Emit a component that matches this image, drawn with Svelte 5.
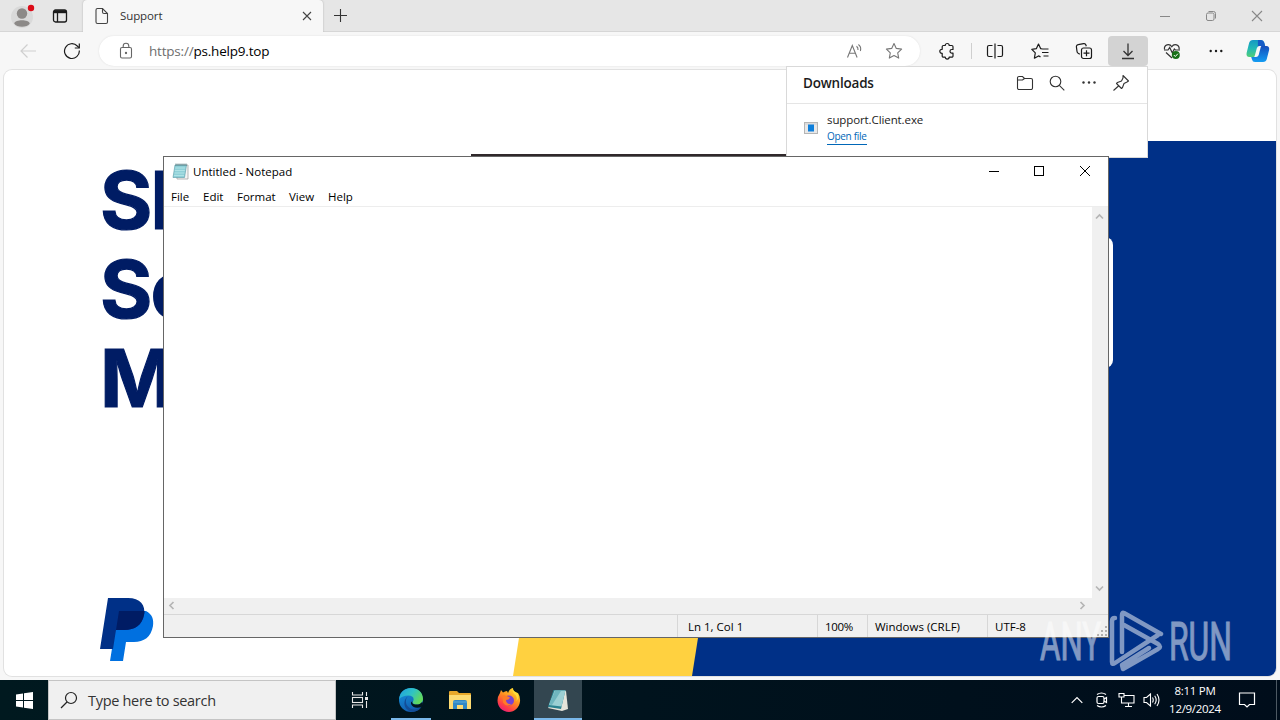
<script>
  const menus = [
    { label: 'File', width: 32 },
    { label: 'Edit', width: 34 },
    { label: 'Format', width: 52 },
    { label: 'View', width: 39 },
    { label: 'Help', width: 40 }
  ];
  const statusCells = [
    { text: 'Ln 1, Col 1', kind: 'position' },
    { text: '100%', kind: 'zoom' },
    { text: 'Windows (CRLF)', kind: 'ending' },
    { text: 'UTF-8', kind: 'encoding' }
  ];
  const headline = ['Sh', 'So', 'M'];
</script>

<div class="desktop">
  <div class="browser">
    <div class="tab-strip">
      <div class="profile">
        <svg width="26" height="26" viewBox="0 0 26 26">
          <circle cx="13" cy="14" r="11" fill="#d9d9d9" />
          <circle cx="13" cy="10.5" r="5.2" fill="#8c8987" />
          <path d="M5.2 20.5c1-4.2 14.6-4.2 15.6 0-2.5 4.4-13.1 4.4-15.6 0z" fill="#8c8987" />
          <circle cx="22" cy="5" r="3.2" fill="#dc0b18" />
        </svg>
      </div>
      <div class="tab-actions">
        <svg width="16" height="16" viewBox="0 0 16 16" fill="none" stroke="#1b1b1b" stroke-width="1.300">
          <rect x="1.500" y="2" width="13" height="12" rx="2" />
          <path d="M2 3.700h12" stroke-width="3" />
          <path d="M5.500 4v10" />
        </svg>
      </div>
      <div class="tab">
        <svg width="16" height="18" viewBox="0 0 16 18" fill="none" stroke="#444" stroke-width="1.100">
          <path d="M3.500 1.500h5l5 5v8.500a1.500 1.500 0 0 1-1.500 1.500h-8.500a1.500 1.500 0 0 1-1.500-1.500v-12a1.500 1.500 0 0 1 1.500-1.500z" />
          <path d="M8.500 1.500v3.500a1.500 1.500 0 0 0 1.500 1.500h3.500" />
        </svg>
        <span class="tab-title">Support</span>
        <svg width="10" height="10" viewBox="0 0 10 10" stroke="#444" stroke-width="1.100">
          <path d="M1 1l8 8M9 1l-8 8" />
        </svg>
      </div>
      <div class="new-tab">
        <svg width="15" height="15" viewBox="0 0 15 15" stroke="#333" stroke-width="1.100">
          <path d="M7.500 1v13M1 7.500h13" />
        </svg>
      </div>
      <div class="window-buttons">
        <svg width="46" height="31" viewBox="0 0 46 31" stroke="#888"><path d="M18 16.500h10" /></svg>
        <svg width="46" height="31" viewBox="0 0 46 31" fill="none" stroke="#888">
          <rect x="18.500" y="13" width="7.500" height="7.500" rx="1.500" />
          <path d="M20.500 11.500h5a2 2 0 0 1 2 2v5" />
        </svg>
        <svg width="46" height="31" viewBox="0 0 46 31" stroke="#888" stroke-width="1.100"><path d="M18 11l10 10M28 11l-10 10" /></svg>
      </div>
    </div>

    <div class="toolbar">
      <div class="nav-button">
        <svg width="18" height="16" viewBox="0 0 18 16" fill="none" stroke="#cfcfcf" stroke-width="1.200">
          <path d="M17 8h-15M8.500 1.500l-6.500 6.500 6.500 6.500" />
        </svg>
      </div>
      <div class="nav-button reload">
        <svg width="18" height="18" viewBox="0 0 18 18" fill="none" stroke="#1b1b1b" stroke-width="1.200">
          <path d="M16.300 8.500a7.400 7.400 0 1 1-2-4.500l1.700 1.700" />
          <path d="M16.300 1.500v4.500h-4.500" />
        </svg>
      </div>
      <div class="address-bar">
        <svg class="lock" width="14" height="18" viewBox="0 0 14 18" fill="none" stroke="#666" stroke-width="1.100">
          <rect x="1.500" y="5.500" width="11" height="10.500" rx="1.500" />
          <path d="M4.200 5.500v-1.500a2.800 2.800 0 0 1 5.600 0v1.500" />
          <circle cx="7" cy="11" r=".6" fill="#666" />
        </svg>
        <span class="url"><span class="scheme">https://</span>ps.help9.top</span>
        <svg class="read" width="18" height="16" viewBox="0 0 18 16" fill="none" stroke="#777" stroke-width="1.100">
          <path d="M1.500 14.500l4.800-12 4.800 12M3.200 10.300h6.300" />
          <path d="M10.500 3.200c1.300 1 1.700 2.300 1.500 3.800M12.400 1.500c2.100 1.500 2.700 4 2 6.500" />
        </svg>
        <svg class="star" width="18" height="18" viewBox="0 0 18 18" fill="none" stroke="#777" stroke-width="1.100" stroke-linejoin="round">
          <path d="M9 1.500l2.300 4.900 5.300.7-3.900 3.700 1 5.300-4.700-2.600-4.700 2.600 1-5.300-3.900-3.700 5.300-.7z" />
        </svg>
      </div>
      <div class="actions">
        <div class="action extension">
          <svg width="18" height="18" viewBox="0 0 18 18" fill="none" stroke="#1b1b1b" stroke-width="1.200" stroke-linejoin="round">
            <path d="M7.200 3.500a2 2 0 0 1 4 0h2.600a1.200 1.200 0 0 1 1.200 1.200v2.800h-1.200a1.800 1.800 0 0 0 0 3.600h1.200v2.800a1.200 1.200 0 0 1-1.200 1.200h-2.600a2 2 0 0 1-4 0h-1.800a1.200 1.200 0 0 1-1.200-1.200v-2.600h-.4a2 2 0 0 1 0-4h.4v-2.600a1.200 1.200 0 0 1 1.200-1.200z" />
          </svg>
        </div>
        <div class="divider"></div>
        <div class="action split">
          <svg width="18" height="16" viewBox="0 0 18 16" fill="none" stroke="#1b1b1b" stroke-width="1.200">
            <path d="M6.500 2.500h-3.500a1.500 1.500 0 0 0-1.500 1.500v8a1.500 1.500 0 0 0 1.500 1.500h3.500M11.500 2.500h3.500a1.500 1.500 0 0 1 1.500 1.500v8a1.500 1.500 0 0 1-1.500 1.500h-3.500M9 .5v15" />
          </svg>
        </div>
        <div class="action">
          <svg width="18" height="18" viewBox="0 0 18 18" fill="none" stroke="#1b1b1b" stroke-width="1.200" stroke-linejoin="round">
            <path d="M11.500 7l-1.800-.3-2.200-4.700-2.200 4.700-4.500.7 3.500 3.500-.9 5.300 4.100-2.300 2 1M11.500 7h6M11 10.500h6.500M12.500 14h5" />
          </svg>
        </div>
        <div class="action">
          <svg width="18" height="18" viewBox="0 0 18 18" fill="none" stroke="#1b1b1b" stroke-width="1.200">
            <rect x="6.500" y="6" width="10" height="10.500" rx="2" />
            <path d="M4.800 12.200l-1.600-.9a2.500 2.500 0 0 1-1.200-2l-.6-4.500a2 2 0 0 1 1.800-2.200l5.400-1a2 2 0 0 1 2.300 1.400l.4 1.300M11.500 8.200v6M8.500 11.200h6" />
          </svg>
        </div>
        <div class="action active">
          <svg width="16" height="18" viewBox="0 0 16 18" fill="none" stroke="#333" stroke-width="1.300">
            <path d="M8 1.500v12M3.500 9l4.500 4.500 4.500-4.500M2 16.500h12" />
          </svg>
        </div>
        <div class="action">
          <svg width="18" height="18" viewBox="0 0 18 18" fill="none" stroke="#333" stroke-width="1.200">
            <path d="M1.500 7.500c-.8-5 5-6.500 7.300-2.800 2.300-3.700 8-2.200 7.300 2.800M3 10.500l6 5.500" />
            <path d="M1 8h4l1.700-2.500 2.600 5.500 2-4 1 1h4.700" />
            <circle cx="12.800" cy="13" r="4" fill="#187018" stroke="none" />
            <path d="M10.800 13l1.500 1.500 2.600-2.800" stroke="#fff" stroke-width="1" />
          </svg>
        </div>
        <div class="action">
          <svg width="16" height="4" viewBox="0 0 16 4" fill="#1b1b1b"><circle cx="2.700" cy="2" r="1.200" /><circle cx="8" cy="2" r="1.200" /><circle cx="13.300" cy="2" r="1.200" /></svg>
        </div>
        <div class="copilot">
          <svg width="24" height="24" viewBox="0 0 24 24">
            <defs>
              <linearGradient id="cp-a" x1="0" y1="0" x2="0" y2="1"><stop offset="0" stop-color="#1498c4" /><stop offset=".5" stop-color="#22b9b6" /><stop offset="1" stop-color="#51ce77" /></linearGradient>
              <linearGradient id="cp-b" x1="0" y1="0" x2="0" y2="1"><stop offset="0" stop-color="#144dbb" /><stop offset="1" stop-color="#139cf2" /></linearGradient>
            </defs>
            <path d="M7 1h8q2.500 0 3.200 2.500l.8 3.500h-4.500q-2 0-2.600 2l-2 7q-.5 2-2.500 2h-4q-3.400 0-2.800-4l2.500-10q.8-3 3.900-3z" fill="url(#cp-a)" />
            <path d="M12 1h3q2.500 0 3.200 2.500l1 3.500h-5q-2 0-2.400 1.500z" fill="#155bc6" />
            <path d="M17 23h-8q-2.500 0-3-2.500l-.8-2.500h3.500q2 0 2.600-2l2-7q.6-2 2.500-2h4.500q3.400 0 2.800 4l-2.300 9q-.7 3-3.800 3z" fill="url(#cp-b)" />
            <path d="M15 7h-1.500q-2 0-2.600 2l-2.500 9h1.500q2.200 0 2.800-2z" fill="#f7f7f7" />
          </svg>
        </div>
      </div>
    </div>

    <div class="page">
      <svg class="page-shapes" width="1272" height="606" viewBox="4 70 1272 606">
        <path d="M471 154h320v4h-320z" fill="#30282b" />
        <path d="M519 638h180l-6 38h-180z" fill="#ffd140" />
        <path d="M790 141h486v535h-584l6-38z" fill="#003087" />
        <rect x="800" y="237" width="313" height="131" rx="8" fill="#fff" />
      </svg>
      <div class="hero">
        <h1 class="headline">
          {#each headline as line}
            <span>{line}</span>
          {/each}
        </h1>
        <svg class="paypal" width="54" height="65" viewBox="0 0 54 65">
          <path d="M18 13h28c6 3 8 8 7 15-2 11-9 16-19 16h-8l-3 19h-13z" fill="#0070e0" />
          <path d="M8 0h20c12 0 18 7 16 17-2 10-9 15-20 15h-8l-3 19h-13z" fill="#003087" />
          <path d="M19 13h25.500q.1 2-.5 4c-2 10-9 15-20 15h-8z" fill="#001c64" />
        </svg>
      </div>
    </div>
  </div>

  <div class="downloads">
    <div class="downloads-header">
      <h2>Downloads</h2>
      <div class="downloads-actions">
        <svg width="18" height="18" viewBox="0 0 18 18" fill="none" stroke="#333" stroke-width="1.100">
          <path d="M1.500 5v-1a1.500 1.500 0 0 1 1.500-1.500h3.500l2 2h6.500a1.500 1.500 0 0 1 1.500 1.500v8a1.500 1.500 0 0 1-1.500 1.500h-12a1.500 1.500 0 0 1-1.500-1.500zM1.500 6h5l2-1.500" />
        </svg>
        <svg width="18" height="18" viewBox="0 0 18 18" fill="none" stroke="#333" stroke-width="1.100">
          <circle cx="7.500" cy="7.500" r="5.300" /><path d="M11.300 11.300l5 5" />
        </svg>
        <svg width="18" height="18" viewBox="0 0 18 18" fill="#333"><circle cx="3.500" cy="8.500" r="1.200" /><circle cx="9" cy="8.500" r="1.200" /><circle cx="14.500" cy="8.500" r="1.200" /></svg>
        <svg width="18" height="18" viewBox="0 0 18 18" fill="none" stroke="#333" stroke-width="1.100" stroke-linejoin="round">
          <path d="M11 1.500l5.500 5.500-1.500 1-3 1.500-1.500 4-1 1-5-5 1-1 4-1.500 1.500-3zM6.500 12l-5 4.500" />
        </svg>
      </div>
    </div>
    <div class="download-item">
      <svg width="14" height="12" viewBox="0 0 14 12">
        <rect x=".5" y=".5" width="13" height="11" fill="#e8e8e8" stroke="#b5b5b5" />
        <path d="M1 2h12" stroke="#cfcfcf" />
        <rect x="4" y="2.500" width="6" height="7" fill="#0e7fdb" />
      </svg>
      <div class="download-info">
        <span class="file-name">support.Client.exe</span>
        <span class="open-file">Open file</span>
      </div>
    </div>
  </div>

  <div class="notepad">
    <div class="title-bar">
      <svg width="17" height="17" viewBox="0 0 17 17">
        <path d="M4 2h12v14h-11z" fill="#f4f4f4" stroke="#999" stroke-width=".7" />
        <path d="M3 2h11.500l-2 12.500h-11.500z" fill="#8fd0d8" stroke="#5598a4" stroke-width=".6" />
        <path d="M3.300 5h10M2.800 7.500h10M2.500 10h10M2 12.500h10" stroke="#b8e7ea" stroke-width=".8" />
        <path d="M4 .5v2.500M6 .5v2.500M8 .5v2.500M10 .5v2.500M12 .5v2.500M14 .5v2.500" stroke="#50777c" stroke-width=".8" />
      </svg>
      <span class="title">Untitled - Notepad</span>
      <svg width="46" height="30" viewBox="0 0 46 30" stroke="#000"><path d="M18 15.500h10" /></svg>
      <svg width="45" height="30" viewBox="0 0 45 30" fill="none" stroke="#000"><rect x="17.500" y="10.500" width="9" height="9" /></svg>
      <svg width="46" height="30" viewBox="0 0 46 30" stroke="#000"><path d="M18 10l10 10M28 10l-10 10" /></svg>
    </div>
    <div class="menu-bar">
      {#each menus as menu}
        <span style="width: {menu.width}px">{menu.label}</span>
      {/each}
    </div>
    <div class="editor">
      <div class="text-area"></div>
      <div class="scroll-vertical">
        <svg width="9" height="7" viewBox="0 0 9 7" fill="none" stroke="#b5b5b5" stroke-width="1.700"><path d="M1 5.500l3.500-3.500 3.500 3.500" /></svg>
        <svg width="9" height="7" viewBox="0 0 9 7" fill="none" stroke="#b5b5b5" stroke-width="1.700"><path d="M1 1.500l3.500 3.500 3.500-3.500" /></svg>
      </div>
    </div>
    <div class="scroll-horizontal">
      <svg width="7" height="9" viewBox="0 0 7 9" fill="none" stroke="#b5b5b5" stroke-width="1.700"><path d="M5.500 1l-3.500 3.500 3.500 3.500" /></svg>
      <svg width="7" height="9" viewBox="0 0 7 9" fill="none" stroke="#b5b5b5" stroke-width="1.700"><path d="M1.500 1l3.500 3.500-3.500 3.500" /></svg>
    </div>
    <div class="status-bar">
      {#each statusCells as cell}
        <span class="cell {cell.kind}">{cell.text}</span>
      {/each}
      <svg width="11" height="11" viewBox="0 0 11 11" fill="#b0b0b0"><path d="M8 0h2v2h-2zM8 4h2v2h-2zM8 8h2v2h-2zM4 4h2v2h-2zM4 8h2v2h-2zM0 8h2v2h-2z" /></svg>
    </div>
  </div>

  <!-- Sandbox watermark over the desktop -->
  <svg class="watermark" width="210" height="80" viewBox="1030 600 210 80">
    <g fill="#fff" stroke="#fff" stroke-width="1" font-family="Roboto, sans-serif" font-size="53">
      <text x="1040" y="660" textLength="61" lengthAdjust="spacingAndGlyphs">ANY</text>
      <text x="1169" y="660" textLength="63" lengthAdjust="spacingAndGlyphs">RUN</text>
    </g>
    <g fill="none" stroke="#fff" stroke-width="4.500" stroke-linecap="round" stroke-linejoin="round">
      <path d="M1115 618q-3 0-3 3v41q0 3 3 1l43-28" />
      <path d="M1161 634l-37-21q-2-1-2 2v37" />
      <path d="M1124 625l34 19q4 3 0 5l-35 20-1-4 27-17" />
    </g>
  </svg>

  <div class="taskbar">
    <div class="start">
      <svg width="17" height="17" viewBox="0 0 17 17" fill="#fff"><path d="M0 2.500l7-1v6.500h-7zM8 1.300l9-1.300v8h-9zM0 9h7v6.500l-7-1zM8 9h9v8l-9-1.300z" /></svg>
    </div>
    <div class="search-box">
      <svg width="18" height="18" viewBox="0 0 18 18" fill="none" stroke="#222" stroke-width="1.200"><circle cx="11" cy="7" r="5.500" /><path d="M7 11l-6 6" /></svg>
      <span>Type here to search</span>
    </div>
    <div class="apps">
      <div class="app task-view">
        <svg width="18" height="18" viewBox="0 0 18 18" fill="none" stroke="#e8e8e8" stroke-width="1.100">
          <path d="M1.500 1v3h10v-3M1.500 17v-3h10v3" /><rect x="1.500" y="6.500" width="10" height="5" /><path d="M15.500 1v4M15.500 10v7" /><path d="M14 7.500h3" stroke-width="3" />
        </svg>
      </div>
      <div class="app open">
        <svg width="26" height="26" viewBox="0 0 26 26">
          <defs>
            <linearGradient id="edge-a" x1="0" y1="0" x2="1" y2=".5"><stop offset="0" stop-color="#1f9fe0" /><stop offset=".55" stop-color="#2fc3c5" /><stop offset="1" stop-color="#62d95c" /></linearGradient>
            <linearGradient id="edge-b" x1="0" y1="0" x2=".5" y2="1"><stop offset="0" stop-color="#1797df" /><stop offset="1" stop-color="#115baf" /></linearGradient>
          </defs>
          <circle cx="13" cy="13" r="12" fill="url(#edge-b)" />
          <path d="M1.300 12c.5-15 23.700-14.500 23.700 0 0 3.500-3 5.500-6 5.500-3.500 0-5-1.500-4-3 2-4-1-6-4.500-6-4 0-7.500 1.500-9.200 3.500z" fill="url(#edge-a)" />
          <path d="M10.500 9c-3 2-3.500 7-1 10 3.500 4.500 9.500 4.500 14 .8-4 7.500-15.500 6-17-2-.5-4 1-7.300 4-8.800z" fill="#134d97" />
          <path d="M14.500 14.500c-1 1.500.5 3.100 4 3.100 2.300 0 4.400-1 5.600-2.600l.8 1.500-1.300 3.200c-4.500 2-9.500.8-10.500-2.700-.4-1.500.3-2.700 1.400-2.500z" fill="#03161f" />
        </svg>
      </div>
      <div class="app">
        <svg width="22" height="20" viewBox="0 0 22 20">
          <path d="M0 2q0-1 1-1h7l2 2h11q1 0 1 1v14h-22z" fill="#e8a82a" /><path d="M0 5h22v14h-22z" fill="#fddb72" /><path d="M4 19v-7q0-2 2-2h10q2 0 2 2v7h-4v-4h-6v4z" fill="#3189c5" /><path d="M4 12h14" stroke="#5dabd8" />
        </svg>
      </div>
      <div class="app">
        <svg width="24" height="24" viewBox="0 0 24 24">
          <defs><linearGradient id="fox" x1=".8" y1="0" x2=".2" y2="1"><stop offset="0" stop-color="#ffe431" /><stop offset=".45" stop-color="#ff8c20" /><stop offset=".75" stop-color="#ff4144" /><stop offset="1" stop-color="#e51682" /></linearGradient></defs>
          <path d="M3 5l1-3 2 2.500q2-1.500 4-1.500l1 2q1.500-4.500 5-5 0 3 3 4.500l2 .5q2.500 3.500 2 8.500c-.7 6-5.500 10.500-11 10.500-6.500 0-11.500-5-11.500-11.500q0-4 2.500-7.500z" fill="url(#fox)" />
          <circle cx="12" cy="12.500" r="5" fill="#7843d2" />
          <path d="M5.500 7l5 1.300 2.500 1.200q-1 2.500-4 2.500 0 4 5.500 4.500-6 2.500-8.500-2z" fill="#ff7b27" />
          <path d="M15.500 1q0 4 3.500 6.500 1.500 2.500.5 5.500l2-3q.3-3.500-2-5.500-3-1-4-3.500z" fill="#ffdc3b" />
        </svg>
      </div>
      <div class="app open focused">
        <svg width="24" height="24" viewBox="0 0 24 24">
          <path d="M16 2l4 1 2 18-6 2-14-3z" fill="#e6e4da" />
          <path d="M7.500 2h12l-4.500 19-13-2z" fill="#2b8290" />
          <path d="M8.500 2.500h11l-4 16-12.500-1.500z" fill="#9bcfd3" />
          <path d="M9 3h6l-9 14-3-.5z" fill="#6fb5be" />
        </svg>
      </div>
    </div>
    <div class="tray">
      <svg class="tray-up" width="12" height="8" viewBox="0 0 12 8" fill="none" stroke="#fff" stroke-width="1.200"><path d="M.7 6.800l5.300-5.300 5.300 5.300" /></svg>
      <svg width="16" height="18" viewBox="0 0 16 18" fill="none" stroke="#fff" stroke-width="1.200"><path d="M3 3.500q4.500-3 9 0M3 14.500q4.500 3 9 0" /><rect x="3" y="5.500" width="7" height="7" rx="1.500" /><path d="M10 8l2.500-1.500v5l-2.500-1.500" /></svg>
      <svg width="17" height="16" viewBox="0 0 17 16" fill="none" stroke="#fff" stroke-width="1.100"><path d="M6 3.500h10v7.500h-10.500M10.500 11v3.500M7 14.500h7M1 1.500h5v3.500h-5zM3.500 5v6h2" /></svg>
      <svg width="17" height="16" viewBox="0 0 17 16" fill="none" stroke="#fff" stroke-width="1.100"><path d="M1 5.500h2.500l4-3.500v12l-4-3.500h-2.500zM9.500 5.500q1.500 2.500 0 5M11.700 3.700q3 4.300 0 8.600M14 2q4 6 0 12" /></svg>
      <div class="clock"><span>8:11 PM</span><span>12/9/2024</span></div>
      <svg width="18" height="18" viewBox="0 0 18 18" fill="none" stroke="#fff" stroke-width="1.200"><path d="M1.500 2h15v11.500h-5l-2.500 2.500-2.500-2.500h-5z" /></svg>
      <div class="show-desktop"></div>
    </div>
  </div>
</div>

<style>
  :global(body) {
    margin: 0;
    overflow: hidden;
  }

  .desktop {
    position: relative;
    width: 1280px;
    height: 720px;
    display: flex;
    flex-direction: column;
    overflow: hidden;
    background: #f7f7f7;
    font-family: 'Open Sans', 'Noto Sans', sans-serif;
    font-size: 12px;
    color: #000;
    white-space: nowrap;
  }

  svg {
    display: block;
    flex: none;
  }

  .browser {
    height: 680px;
    display: flex;
    flex-direction: column;
  }

  /* Tabs */
  .tab-strip {
    height: 32px;
    display: flex;
    background: #e6e6e6;
    box-shadow: inset 0 -1px #d6d6d6;
  }

  .profile {
    width: 35px;
    padding: 3px 0 0 9px;
    box-sizing: border-box;
  }

  .tab-actions {
    width: 48px;
    padding: 8px 0 0 17px;
    box-sizing: border-box;
  }

  .tab {
    width: 240px;
    box-sizing: border-box;
    display: flex;
    align-items: center;
    padding: 0 11px;
    background: #f7f7f7;
    border-radius: 4px 4px 0 0;
    box-shadow: 0 0 2px #aaa;
    clip-path: inset(0 -3px 0 -3px);
  }

  .tab-title {
    flex: 1;
    margin-left: 10px;
    padding-bottom: 2px;
    font-size: 11.5px;
    letter-spacing: -0.1px;
    color: #333;
  }

  .new-tab {
    padding: 8px 10px;
  }

  .window-buttons {
    display: flex;
    margin-left: auto;
  }

  /* Toolbar */
  .toolbar {
    height: 38px;
    display: flex;
    align-items: center;
    box-sizing: border-box;
  }

  .nav-button {
    width: 56px;
    display: flex;
    justify-content: center;
  }

  .nav-button.reload {
    width: 32px;
    margin-right: 11px;
  }

  .address-bar {
    width: 821px;
    height: 30px;
    box-sizing: border-box;
    display: flex;
    align-items: center;
    padding: 0 17px 0 20px;
    border-radius: 15px;
    background: #fff;
    box-shadow: 0 0 2px #ddd;
  }

  .url {
    flex: 1;
    margin-left: 16px;
    font-size: 13.5px;
    letter-spacing: -0.2px;
  }

  .scheme {
    color: #6e6e6e;
  }

  .read {
    margin-right: 21px;
  }

  .actions {
    display: flex;
    align-items: center;
  }

  .action {
    width: 40px;
    height: 30px;
    margin-right: 4px;
    display: flex;
    align-items: center;
    justify-content: center;
  }

  .extension {
    margin: 0 4px 0 7px;
  }

  .divider {
    width: 1px;
    height: 16px;
    margin-right: 3px;
    background: #cfcfcf;
  }

  .split {
    margin-right: 5px;
  }

  .active {
    background: #d3d3d3;
    border-radius: 4px;
  }

  .copilot {
    margin-left: 6px;
  }

  /* Page */
  .page {
    position: relative;
    height: 606px;
    margin: 0 4px;
    border-radius: 8px;
    overflow: hidden;
    background: #fff;
    box-shadow: 0 0 0 1px #e1e1e1;
  }

  .page-shapes {
    position: absolute;
    inset: 0;
  }

  .hero {
    position: relative;
    padding: 85px 0 0 96px;
  }

  .headline {
    margin: 0;
    display: flex;
    flex-direction: column;
    font-family: Inter, sans-serif;
    font-size: 80px;
    font-weight: 700;
    line-height: 89px;
    letter-spacing: -2px;
    color: #001c64;
    -webkit-text-stroke: 1.2px #001c64;
  }

  .paypal {
    margin-top: 176px;
  }

  /* Downloads flyout */
  .downloads {
    position: absolute;
    left: 786px;
    top: 66px;
    width: 362px;
    height: 92px;
    box-sizing: border-box;
    border: 1px solid #d9d9d9;
    background: #fff;
  }

  .downloads-header {
    height: 37px;
    box-sizing: border-box;
    display: flex;
    align-items: center;
    justify-content: space-between;
    padding: 0 17px 4px 16px;
    border-bottom: 1px solid #e5e5e5;
  }

  .downloads-header h2 {
    margin: 0;
    font-size: 13.5px;
    font-weight: 600;
    color: #1b1b1b;
    letter-spacing: -0.2px;
  }

  .downloads-actions {
    display: flex;
    gap: 14px;
  }

  .download-item {
    display: flex;
    align-items: center;
    gap: 9px;
    padding: 7px 17px;
  }

  .download-info {
    display: flex;
    flex-direction: column;
    align-items: flex-start;
  }

  .file-name {
    line-height: 17px;
    font-size: 11.5px;
    letter-spacing: -0.1px;
    color: #222;
  }

  .open-file {
    line-height: 15px;
    margin-top: 1px;
    font-size: 10px;
    letter-spacing: -0.3px;
    color: #0067b8;
    border-bottom: 1px solid #0067b8;
  }

  /* Notepad window */
  .notepad {
    position: absolute;
    left: 163px;
    top: 156px;
    width: 946px;
    height: 482px;
    box-sizing: border-box;
    display: flex;
    flex-direction: column;
    border: 1px solid #666;
    background: #fff;
  }

  .title-bar {
    height: 30px;
    box-sizing: border-box;
    display: flex;
    align-items: center;
    padding: 0 0 2px 8px;
  }

  .title {
    flex: 1;
    margin-left: 4px;
    font-size: 11.5px;
  }

  .menu-bar {
    height: 20px;
    box-sizing: border-box;
    display: flex;
    padding-left: 7px;
    border-bottom: 1px solid #ededed;
    line-height: 20px;
    font-size: 11.5px;
  }

  .editor {
    flex: 1;
    display: flex;
  }

  .text-area {
    flex: 1;
  }

  .scroll-vertical {
    width: 16px;
    box-sizing: border-box;
    display: flex;
    flex-direction: column;
    justify-content: space-between;
    align-items: center;
    padding: 6px 2px 6px 0;
    background: #f0f0f0;
  }

  .scroll-horizontal {
    height: 16px;
    box-sizing: border-box;
    display: flex;
    justify-content: space-between;
    align-items: center;
    padding: 0 22px 2px 4px;
    background: #f0f0f0;
  }

  .status-bar {
    height: 23px;
    box-sizing: border-box;
    display: flex;
    justify-content: flex-end;
    border-top: 1px solid #d7d7d7;
    background: #f0f0f0;
    line-height: 23px;
    font-size: 11.5px;
  }

  .status-bar svg {
    align-self: flex-end;
  }

  .cell {
    box-sizing: border-box;
    padding-left: 7px;
    border-left: 1px solid #d7d7d7;
  }

  .position {
    width: 140px;
    padding-left: 10px;
  }

  .zoom {
    width: 50px;
    letter-spacing: -0.3px;
  }

  .ending {
    width: 120px;
  }

  .encoding {
    width: 110px;
  }

  .watermark {
    position: absolute;
    left: 1030px;
    top: 600px;
    opacity: 0.5;
  }

  /* Taskbar */
  .taskbar {
    height: 40px;
    display: flex;
    background: linear-gradient(90deg, #00191f, #00131d 50%, #000d1b);
    color: #fff;
  }

  .start {
    width: 48px;
    display: flex;
    align-items: center;
    justify-content: center;
  }

  .search-box {
    width: 288px;
    box-sizing: border-box;
    display: flex;
    align-items: center;
    gap: 10px;
    padding-left: 11px;
    border: 1px solid #c4c4c4;
    background: #f0f0f0;
    font-size: 14.5px;
    letter-spacing: -0.3px;
    color: #333;
  }

  .apps {
    display: flex;
    gap: 1px;
  }

  .app {
    width: 48px;
    box-sizing: border-box;
    display: flex;
    align-items: center;
    justify-content: center;
  }

  .task-view {
    margin-right: 2px;
  }

  .open {
    background: linear-gradient(#7ab8ea, #7ab8ea) center bottom / 40px 2px no-repeat;
  }

  .focused {
    background-color: #334650;
    background-size: 48px 2px;
  }

  .tray {
    display: flex;
    align-items: center;
    gap: 8px;
    margin-left: auto;
  }

  .tray-up {
    margin-right: 3px;
  }

  .clock {
    width: 60px;
    display: flex;
    flex-direction: column;
    align-items: center;
    line-height: 18px;
    font-size: 11.5px;
    letter-spacing: -0.3px;
    margin: 0 5px 0 -3px;
  }

  .show-desktop {
    width: 3px;
    height: 40px;
    margin-left: 12px;
    border-left: 1px solid #4d5963;
  }
</style>
